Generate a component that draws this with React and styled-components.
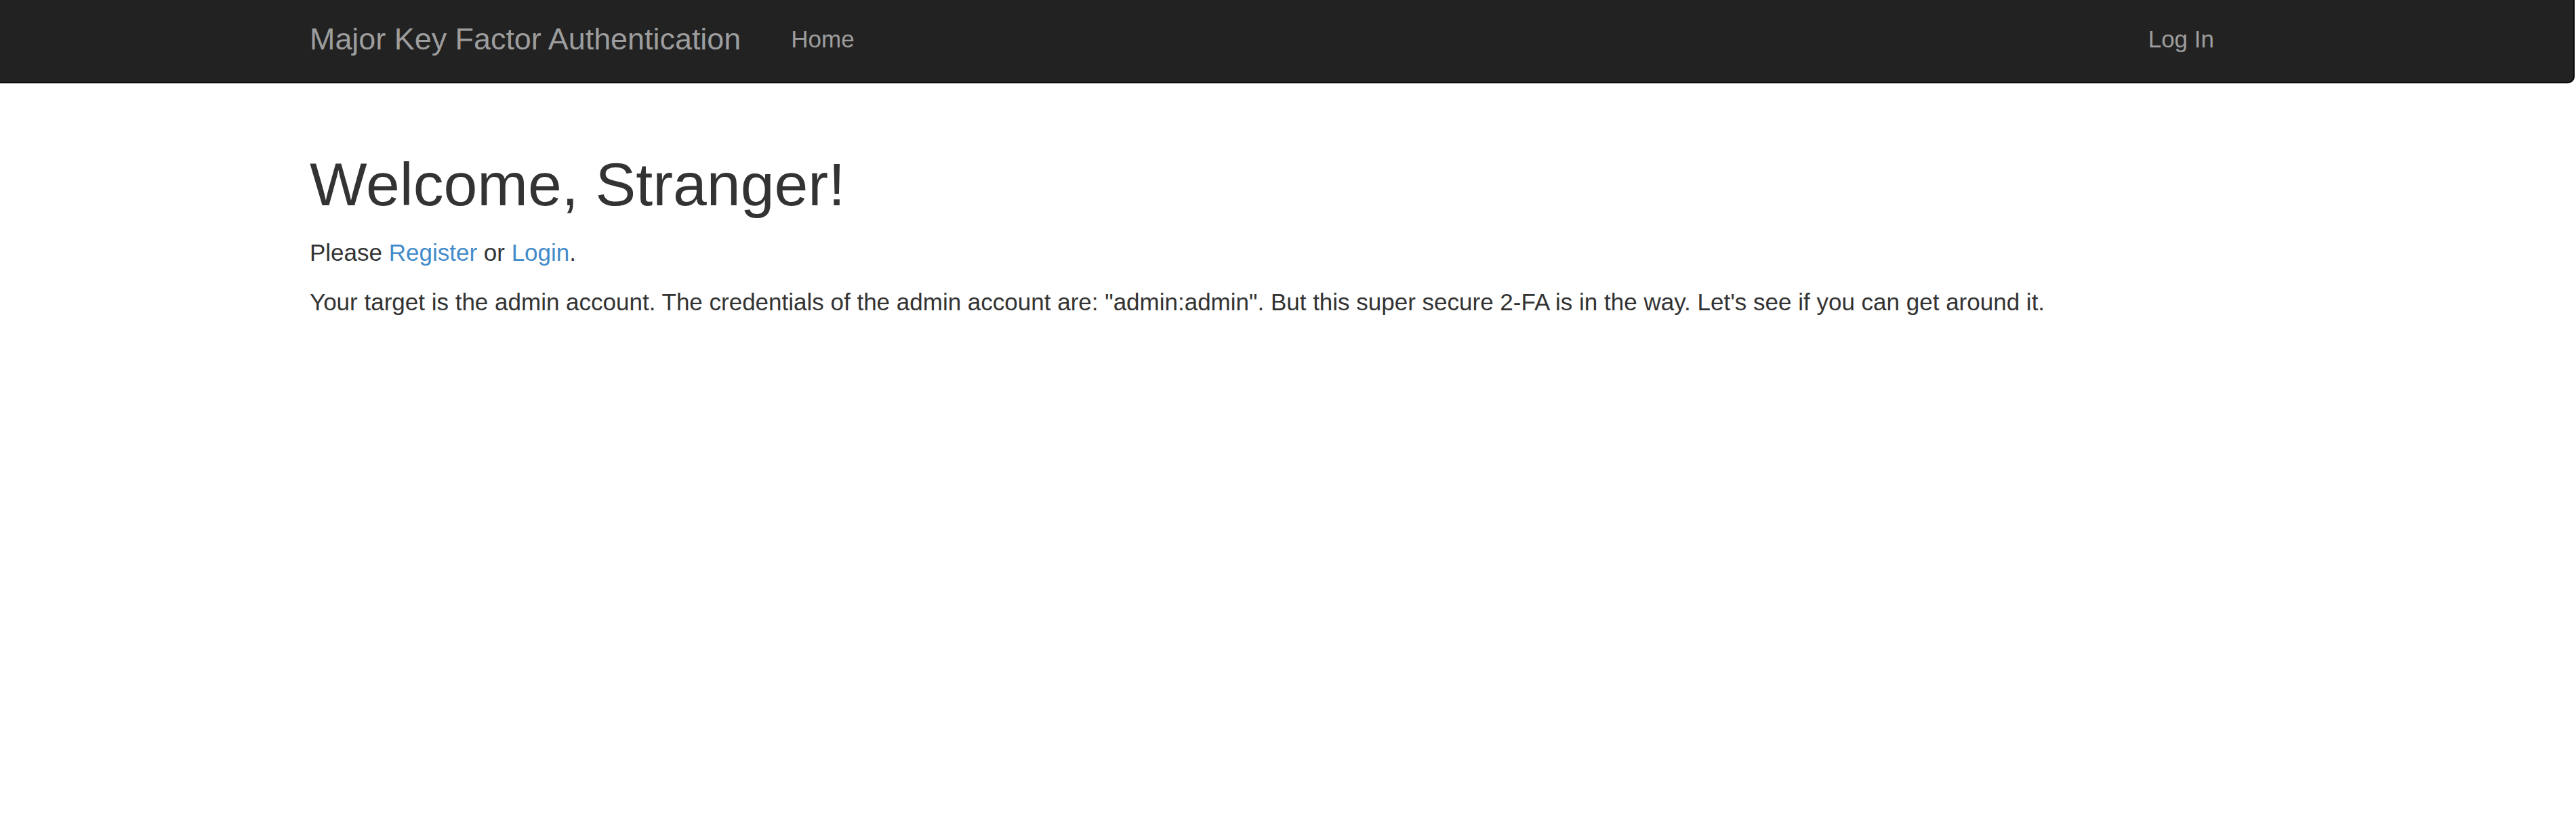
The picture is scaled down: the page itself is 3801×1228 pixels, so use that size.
import React from "react";
import styled, { createGlobalStyle } from "styled-components";

const GlobalStyle = createGlobalStyle`
  html, body {
    margin: 0;
    padding: 0;
    background: #fff;
  }
  body {
    font-family: "Liberation Sans", Arial, Helvetica, sans-serif;
    font-size: 35px;
    line-height: 50px;
    color: #333;
  }
`;

const Navbar = styled.nav`
  background-color: #222;
  border: 0 solid #080808;
  border-width: 0 2px 2px 0;
  border-bottom-right-radius: 10px;
  margin-right: 2px;
  height: 121px;
`;

const Container = styled.div`
  width: 2810px;
  margin-left: 457px;
`;

const NavInner = styled(Container)`
  display: flex;
  align-items: flex-start;
  height: 100%;
`;

const Brand = styled.a`
  font-size: 44.9px;
  line-height: 49px;
  padding: 33px 37px 0 0;
  color: #9d9d9d;
  text-decoration: none;
  white-space: nowrap;
`;

const NavList = styled.ul`
  display: flex;
  list-style: none;
  margin: 0;
  padding: 0;
  margin-left: ${(p) => (p.$right ? "auto" : "0")};
`;

const NavLink = styled.a`
  display: block;
  font-size: 35px;
  line-height: 49px;
  padding: 33px ${(p) => (p.$last ? "0" : "37px")} 0 37px;
  color: #9d9d9d;
  text-decoration: none;
  white-space: nowrap;
`;

const Main = styled(Container)`
  padding-top: 100px;
`;

const Title = styled.h1`
  font-size: 89.6px;
  font-weight: 500;
  line-height: 99px;
  margin: 0 0 26px;
  color: #333;
`;

const Text = styled.p`
  margin: 0 0 23px;
  white-space: nowrap;
`;

const Link = styled.a`
  color: #428bca;
  text-decoration: none;
`;

export default function App() {
  return (
    <>
      <GlobalStyle />
      <Navbar>
        <NavInner>
          <Brand href="#">Major Key Factor Authentication</Brand>
          <NavList>
            <li>
              <NavLink href="#">Home</NavLink>
            </li>
          </NavList>
          <NavList $right>
            <li>
              <NavLink href="#" $last>
                Log In
              </NavLink>
            </li>
          </NavList>
        </NavInner>
      </Navbar>
      <Main>
        <Title>Welcome, Stranger!</Title>
        <Text>
          Please <Link href="#">Register</Link> or <Link href="#">Login</Link>.
        </Text>
        <Text>
          Your target is the admin account. The credentials of the admin account
          are: "admin:admin". But this super secure 2-FA is in the way. Let's see
          if you can get around it.
        </Text>
      </Main>
    </>
  );
}
